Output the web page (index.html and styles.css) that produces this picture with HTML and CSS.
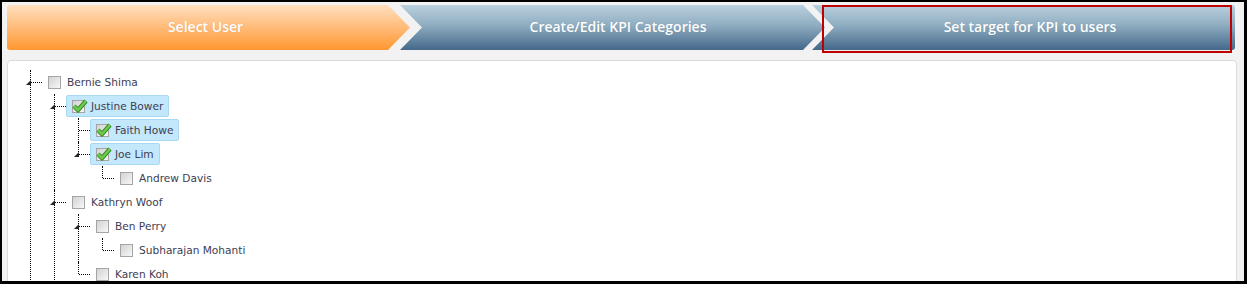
FILE: index.html
```html
<!DOCTYPE html>
<html>
  <head>
    <meta charset="UTF-8">
    <title>KPI Setup</title>
    <link rel="stylesheet" href="styles.css">
  </head>
  <body>
    <div class="wizard">
      <div class="step first">Select User</div>
      <div class="step middle">Create/Edit KPI Categories</div>
      <div class="step last">Set target for KPI to users</div>
      <div class="highlight"></div>
    </div>
    <div class="panel">
      <ul class="tree">
        <li class="open more">
          <div class="row"><a class="node"><span class="cb"></span>Bernie Shima</a></div>
          <ul>
            <li class="open">
              <div class="row"><a class="node sel"><span class="cb on"><svg viewBox="0 0 16 14"><path d="M2 7 L6 11 L14 2" class="out"/><path d="M2 7 L6 11 L14 2" class="in"/></svg></span>Justine Bower</a></div>
              <ul>
                <li>
                  <div class="row"><a class="node sel"><span class="cb on"><svg viewBox="0 0 16 14"><path d="M2 7 L6 11 L14 2" class="out"/><path d="M2 7 L6 11 L14 2" class="in"/></svg></span>Faith Howe</a></div>
                </li>
                <li class="open">
                  <div class="row"><a class="node sel"><span class="cb on"><svg viewBox="0 0 16 14"><path d="M2 7 L6 11 L14 2" class="out"/><path d="M2 7 L6 11 L14 2" class="in"/></svg></span>Joe Lim</a></div>
                  <ul>
                    <li>
                      <div class="row"><a class="node"><span class="cb"></span>Andrew Davis</a></div>
                    </li>
                  </ul>
                </li>
              </ul>
            </li>
            <li class="open more">
              <div class="row"><a class="node"><span class="cb"></span>Kathryn Woof</a></div>
              <ul>
                <li class="open">
                  <div class="row"><a class="node"><span class="cb"></span>Ben Perry</a></div>
                  <ul>
                    <li>
                      <div class="row"><a class="node"><span class="cb"></span>Subharajan Mohanti</a></div>
                    </li>
                  </ul>
                </li>
                <li>
                  <div class="row"><a class="node"><span class="cb"></span>Karen Koh</a></div>
                </li>
              </ul>
            </li>
          </ul>
        </li>
      </ul>
    </div>
  </body>
</html>
```
FILE: styles.css
```css
* {
  box-sizing: border-box;
}
body {
  margin: 0;
  height: 284px;
  overflow: hidden;
  border: solid #000;
  border-width: 2px 3px 3px 2px;
  background-color: #f2f2f2;
  font-family: "DejaVu Sans", sans-serif;
}
.wizard {
  position: relative;
  display: flex;
  height: 45px;
  margin: 3px 0 0 5px;
}
.step {
  display: flex;
  align-items: center;
  justify-content: center;
  height: 45px;
  padding-bottom: 2px;
  color: #fff;
  font-family: "Open Sans", sans-serif;
  font-size: 14px;
  font-weight: 600;
  text-shadow: 0 0 1px rgba(0, 0, 0, 0.15);
  background: linear-gradient(#b9d0dd, #8fadc1 45%, #45688a);
}
.step.first {
  width: 403px;
  padding-right: 6px;
  border-radius: 3px 0 0 3px;
  background: linear-gradient(#ffdfbf, #ffbb78 50%, #ff9730);
  clip-path: polygon(0 0, calc(100% - 22px) 0, 100% 50%, calc(100% - 22px) 100%, 0 100%);
}
.step.middle {
  width: 425px;
  margin-left: -10px;
  padding-left: 11px;
  clip-path: polygon(0 0, calc(100% - 22px) 0, 100% 50%, calc(100% - 22px) 100%, 0 100%, 22px 50%);
}
.step.last {
  width: 423px;
  margin-left: -13px;
  padding-left: 13px;
  border-radius: 0 3px 3px 0;
  clip-path: polygon(0 0, 100% 0, 100% 100%, 0 100%, 22px 50%);
}
.highlight {
  position: absolute;
  left: 815px;
  top: 0;
  width: 410px;
  height: 48px;
  border: 2px solid #c00000;
}
.panel {
  height: 240px;
  margin: 10px 7px 0 5px;
  padding: 9px 0 0 22px;
  background-color: #fff;
  border: 1px solid #dcdcdc;
  border-radius: 4px;
}
.tree, .tree ul {
  list-style: none;
  margin: 0;
  padding: 0;
}
.tree ul {
  margin-left: 12px;
}
.tree li {
  position: relative;
  padding-left: 12px;
}
.tree li::before {
  content: '';
  position: absolute;
  left: 0;
  top: 0;
  bottom: 0;
  border-left: 1px dotted #000;
}
.tree li:last-child::before {
  bottom: auto;
  height: 12px;
}
.tree li.more::before {
  bottom: 0;
  height: auto;
}
.tree li::after {
  content: '';
  position: absolute;
  left: 1px;
  top: 12px;
  width: 11px;
  border-top: 1px dotted #000;
}
.tree li.open > .row::before {
  content: '';
  position: absolute;
  left: -4px;
  top: 10px;
  width: 0;
  height: 0;
  border-style: solid;
  border-width: 0 0 5px 5px;
  border-color: transparent transparent #222 transparent;
}
.row {
  display: flex;
  align-items: center;
  height: 24px;
}
.node {
  display: flex;
  align-items: center;
  gap: 6px;
  height: 22px;
  padding: 0 5px;
  border: 1px solid transparent;
  border-radius: 2px;
  color: #3d3d52;
  font-size: 10.6px;
  white-space: nowrap;
}
.node.sel {
  background-color: #c3e7fb;
  border-color: #a8d8f4;
}
.cb {
  position: relative;
  flex: none;
  width: 13px;
  height: 13px;
  border: 1px solid #a5a5a5;
  background: linear-gradient(135deg, #d2d2d2, #f8f8f8);
}
.cb svg {
  position: absolute;
  left: -1px;
  top: -2px;
  width: 16px;
  height: 14px;
}
.cb .out {
  fill: none;
  stroke: #3b8a2a;
  stroke-width: 4.5;
}
.cb .in {
  fill: none;
  stroke: #6ccb4c;
  stroke-width: 2.5;
}
```
